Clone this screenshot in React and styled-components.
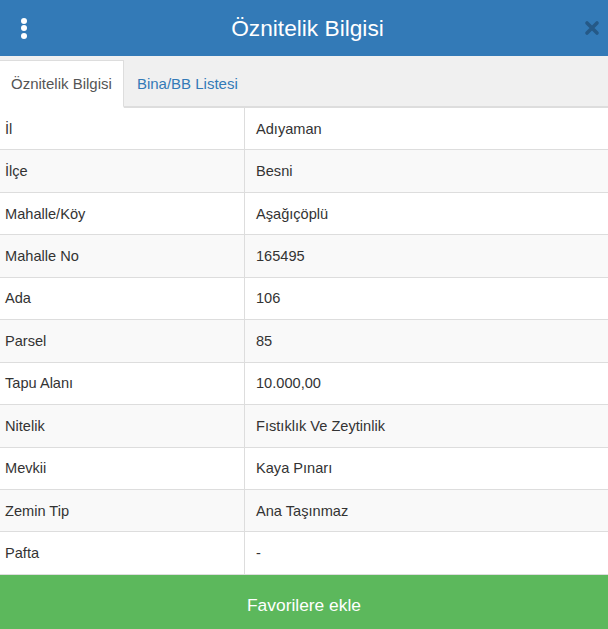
import React, { useState } from 'react'
import styled, { createGlobalStyle } from 'styled-components'

const GlobalStyle = createGlobalStyle`
    html, body {
        margin: 0;
        padding: 0;
        background: #fff;
        font-family: 'Liberation Sans', Arial, sans-serif;
    }
    * {
        box-sizing: border-box;
    }
`

const Panel = styled.div`
    width: 608px;
    height: 629px;
    display: flex;
    flex-direction: column;
    overflow: hidden;
`

const Header = styled.div`
    height: 56px;
    flex: none;
    background-color: #337ab7;
    display: flex;
    align-items: center;
    justify-content: space-between;
    padding: 0 5px 0 14px;
`

const MenuButton = styled.button`
    width: 20px;
    height: 30px;
    border: none;
    background: none;
    padding: 0;
    display: flex;
    flex-direction: column;
    align-items: center;
    justify-content: center;
    gap: 1.5px;
    cursor: pointer;

    span {
        width: 6px;
        height: 6px;
        border-radius: 50%;
        background: #fff;
    }
`

const Title = styled.h1`
    margin: 0;
    font-size: 22.7px;
    font-weight: 400;
    color: #fff;
`

const CloseButton = styled.button`
    width: 22px;
    height: 30px;
    border: none;
    background: none;
    padding: 0;
    display: flex;
    align-items: center;
    justify-content: center;
    cursor: pointer;
`

const TabBar = styled.div`
    flex: none;
    display: flex;
    align-items: flex-end;
    background-color: #f0f0f0;
    padding-top: 4px;
    border-bottom: 2px solid #ddd;
`

const Tab = styled.div`
    height: 48px;
    padding: 0 11px;
    display: flex;
    align-items: center;
    font-size: 15px;
    margin-bottom: -2px;
    cursor: pointer;
    color: ${({ active }) => (active ? '#555' : '#337ab7')};
    background-color: ${({ active }) => (active ? '#fff' : 'transparent')};
    border: 1px solid ${({ active }) => (active ? '#ddd' : 'transparent')};
    border-left: none;
    border-bottom: 2px solid ${({ active }) => (active ? '#fff' : '#ddd')};
    padding-left: ${({ active }) => (active ? '11px' : '13px')};
`

const Table = styled.div`
    flex: 1;
    display: grid;
    grid-template-columns: 244px 1fr;
    grid-auto-rows: 42.45px;
`

const Cell = styled.div`
    display: flex;
    align-items: center;
    font-size: 14.6px;
    color: #333;
    border-bottom: 1px solid #ddd;
    background-color: ${({ striped }) => (striped ? '#f9f9f9' : '#fff')};
    padding-left: ${({ value }) => (value ? '11px' : '5px')};
    border-left: ${({ value }) => (value ? '1px solid #ddd' : 'none')};
`

const AddButton = styled.button`
    flex: none;
    height: 54px;
    border: none;
    padding: 6px 0 0;
    background-color: #5cb85c;
    color: #fff;
    font-family: inherit;
    font-size: 17.4px;
    cursor: pointer;
`

const rows = [
    ['İl', 'Adıyaman'],
    ['İlçe', 'Besni'],
    ['Mahalle/Köy', 'Aşağıçöplü'],
    ['Mahalle No', '165495'],
    ['Ada', '106'],
    ['Parsel', '85'],
    ['Tapu Alanı', '10.000,00'],
    ['Nitelik', 'Fıstıklık Ve Zeytinlik'],
    ['Mevkii', 'Kaya Pınarı'],
    ['Zemin Tip', 'Ana Taşınmaz'],
    ['Pafta', '-'],
]

const App = () => {
    const [tab, setTab] = useState(0)

    return (
        <>
            <GlobalStyle />
            <Panel>
                <Header>
                    <MenuButton>
                        <span />
                        <span />
                        <span />
                    </MenuButton>
                    <Title>Öznitelik Bilgisi</Title>
                    <CloseButton>
                        <svg width="16" height="16" viewBox="0 0 16 16">
                            <path d="M3 3 L13 13 M13 3 L3 13" stroke="#255987" strokeWidth="3.6" strokeLinecap="round" />
                        </svg>
                    </CloseButton>
                </Header>
                <TabBar>
                    <Tab active={tab === 0} onClick={() => setTab(0)}>Öznitelik Bilgisi</Tab>
                    <Tab active={tab === 1} onClick={() => setTab(1)}>Bina/BB Listesi</Tab>
                </TabBar>
                <Table>
                    {rows.map(([label, value], i) => (
                        <React.Fragment key={label}>
                            <Cell striped={i % 2 === 1}>{label}</Cell>
                            <Cell striped={i % 2 === 1} value>{value}</Cell>
                        </React.Fragment>
                    ))}
                </Table>
                <AddButton>Favorilere ekle</AddButton>
            </Panel>
        </>
    )
}

export default App
